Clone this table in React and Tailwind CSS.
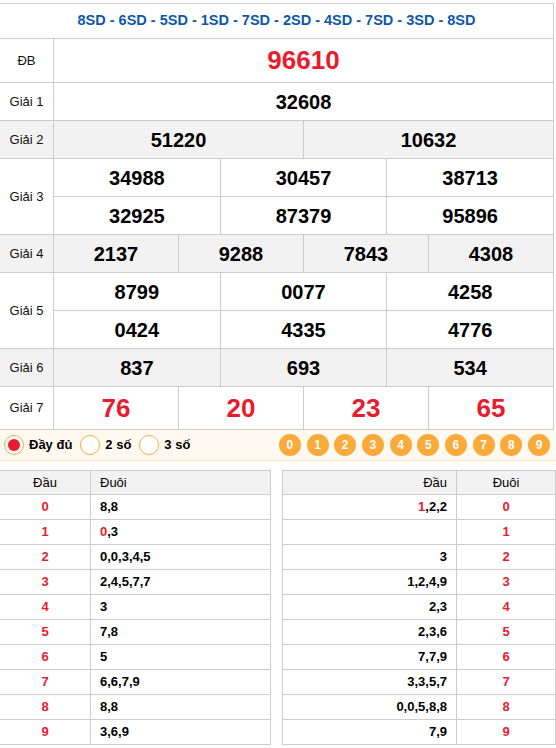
import React from "react";

const font = { fontFamily: '"Liberation Sans", Arial, sans-serif' };

const Row = ({ label, gray, children }) => {
	return (
		<div className={`flex border-b border-[#cccccc] ${gray ? "bg-[#f2f2f2]" : "bg-white"}`}>
			<div className="w-[54px] shrink-0 border-r border-[#cccccc] flex items-center justify-center text-[13px] text-[#111]">
				{label}
			</div>
			<div className="flex-1 flex flex-col">{children}</div>
		</div>
	);
};

const Cells = ({ values, h, last, cls }) => {
	return (
		<div className={`flex ${h} ${last ? "" : "border-b border-[#cccccc]"}`}>
			{values.map((v, i) => (
				<div
					key={i}
					className={`flex-1 flex items-center justify-center font-bold ${cls} ${i > 0 ? "border-l border-[#cccccc]" : ""}`}
				>
					{v}
				</div>
			))}
		</div>
	);
};

const Radio = ({ checked, label }) => (
	<div className="flex items-center gap-[5px]">
		<div className="w-[20px] h-[20px] rounded-full border-[1.5px] border-[#f7ad4a] bg-white flex items-center justify-center">
			{checked && <div className="w-[12px] h-[12px] rounded-full bg-[#ea1b2d]"></div>}
		</div>
		<span className="text-[13px] font-bold text-black">{label}</span>
	</div>
);

const left = [
	["0", [["8,8"]]],
	["1", [["0", true], [",3"]]],
	["2", [["0,0,3,4,5"]]],
	["3", [["2,4,5,7,7"]]],
	["4", [["3"]]],
	["5", [["7,8"]]],
	["6", [["5"]]],
	["7", [["6,6,7,9"]]],
	["8", [["8,8"]]],
	["9", [["3,6,9"]]],
];

const right = [
	["0", [["1", true], [",2,2"]]],
	["1", []],
	["2", [["3"]]],
	["3", [["1,2,4,9"]]],
	["4", [["2,3"]]],
	["5", [["2,3,6"]]],
	["6", [["7,7,9"]]],
	["7", [["3,3,5,7"]]],
	["8", [["0,0,5,8,8"]]],
	["9", [["7,9"]]],
];

const Parts = ({ parts }) =>
	parts.map(([t, red], i) => (
		<span key={i} className={red ? "text-[#ea1b2d]" : "text-black"}>
			{t}
		</span>
	));

const App = () => {
	const big = "text-[20px] text-black";
	return (
		<div className="w-[556px] h-[748px] bg-white overflow-hidden" style={font}>
			<div className="w-[554px] mt-[3px] border-t border-r border-[#cccccc]">
				<div className="h-[35px] border-b border-[#cccccc] flex items-center justify-center text-[14.5px] font-bold text-[#0e58a8]">
					8SD - 6SD - 5SD - 1SD - 7SD - 2SD - 4SD - 7SD - 3SD - 8SD
				</div>
				<Row label="ĐB">
					<Cells values={["96610"]} h="h-[43px]" last cls="text-[26px] text-[#ea1b2d]" />
				</Row>
				<Row label="Giải 1">
					<Cells values={["32608"]} h="h-[37px]" last cls={big} />
				</Row>
				<Row label="Giải 2" gray>
					<Cells values={["51220", "10632"]} h="h-[37px]" last cls={big} />
				</Row>
				<Row label="Giải 3">
					<Cells values={["34988", "30457", "38713"]} h="h-[38px]" cls={big} />
					<Cells values={["32925", "87379", "95896"]} h="h-[37px]" last cls={big} />
				</Row>
				<Row label="Giải 4" gray>
					<Cells values={["2137", "9288", "7843", "4308"]} h="h-[37px]" last cls={big} />
				</Row>
				<Row label="Giải 5">
					<Cells values={["8799", "0077", "4258"]} h="h-[38px]" cls={big} />
					<Cells values={["0424", "4335", "4776"]} h="h-[37px]" last cls={big} />
				</Row>
				<Row label="Giải 6" gray>
					<Cells values={["837", "693", "534"]} h="h-[37px]" last cls={big} />
				</Row>
				<Row label="Giải 7">
					<Cells values={["76", "20", "23", "65"]} h="h-[42px]" last cls="text-[26px] text-[#ea1b2d]" />
				</Row>
			</div>

			<div className="h-[31px] bg-[#fff9f0] border-b border-[#fde5c6] flex items-center pl-[4px]">
				<div className="flex items-center gap-[8px]">
					<Radio checked label="Đầy đủ" />
					<Radio label="2 số" />
					<Radio label="3 số" />
				</div>
				<div className="ml-auto mr-[6px] flex items-center gap-[5.7px]">
					{["0", "1", "2", "3", "4", "5", "6", "7", "8", "9"].map((n) => (
						<div
							key={n}
							className="w-[22px] h-[22px] rounded-full bg-[#f9aa3a] text-white text-[12px] font-bold flex items-center justify-center"
						>
							{n}
						</div>
					))}
				</div>
			</div>

			<div className="flex justify-between mt-[9px]">
				<div className="w-[271px] border-t border-r border-[#cccccc] text-[13px]">
					<div className="flex h-[24px] border-b border-[#cccccc] bg-[#f2f2f2]">
						<div className="w-[91px] border-r border-[#cccccc] flex items-center justify-center">Đầu</div>
						<div className="flex-1 flex items-center pl-[9px]">Đuôi</div>
					</div>
					{left.map(([d, parts]) => (
						<div key={d} className="flex h-[25px] border-b border-[#cccccc] font-bold">
							<div className="w-[91px] border-r border-[#cccccc] flex items-center justify-center text-[#ea1b2d]">{d}</div>
							<div className="flex-1 flex items-center pl-[9px]">
								<Parts parts={parts} />
							</div>
						</div>
					))}
				</div>

				<div className="w-[274px] border-t border-l border-r border-[#cccccc] text-[13px]">
					<div className="flex h-[24px] border-b border-[#cccccc] bg-[#f2f2f2]">
						<div className="w-[174px] border-r border-[#cccccc] flex items-center justify-end pr-[9px]">Đầu</div>
						<div className="flex-1 flex items-center justify-center">Đuôi</div>
					</div>
					{right.map(([d, parts]) => (
						<div key={d} className="flex h-[25px] border-b border-[#cccccc] font-bold">
							<div className="w-[174px] border-r border-[#cccccc] flex items-center justify-end pr-[9px]">
								<Parts parts={parts} />
							</div>
							<div className="flex-1 flex items-center justify-center text-[#ea1b2d]">{d}</div>
						</div>
					))}
				</div>
			</div>
		</div>
	);
};

export default App;
